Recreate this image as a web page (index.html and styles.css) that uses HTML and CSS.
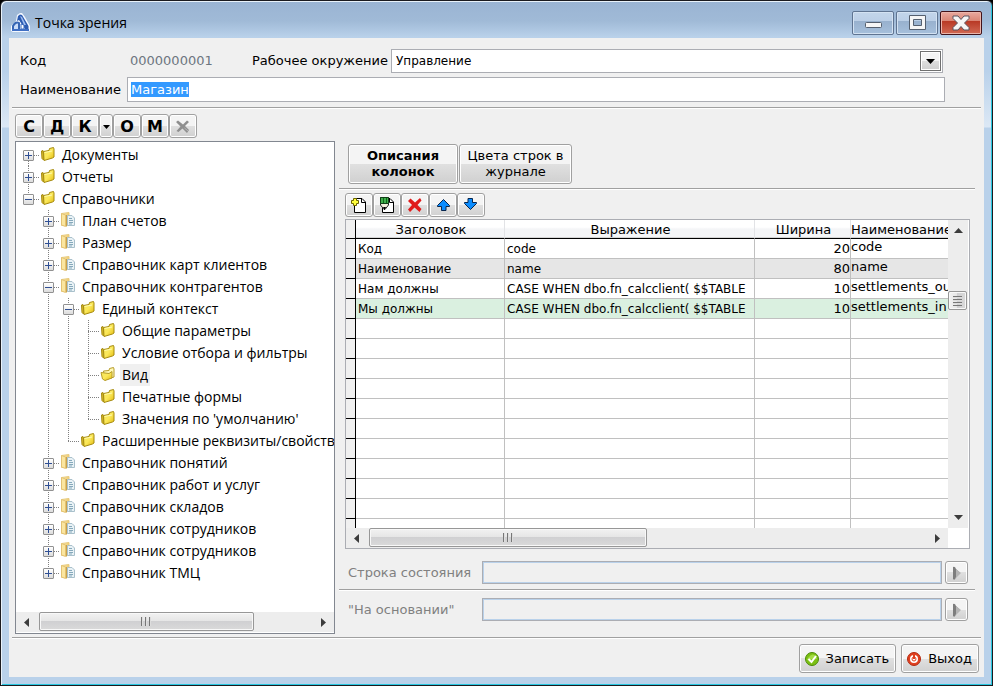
FILE: index.html
```html
<!DOCTYPE html>
<html lang="ru">
<head>
    <meta charset="UTF-8">
    <meta name="viewport" content="width=device-width, initial-scale=1.0">
    <title>Точка зрения</title>
    <link rel="stylesheet" href="styles.css">
</head>
<body>
    <!-- общие иконки -->
    <svg class="sprite" width="0" height="0" aria-hidden="true">
        <defs>
            <linearGradient id="gold" x1="0" y1="0" x2="1" y2="1">
                <stop offset="0" stop-color="#f6e65e"/>
                <stop offset="0.5" stop-color="#fbe85a"/>
                <stop offset="1" stop-color="#e2b80a"/>
            </linearGradient>
            <linearGradient id="sand" x1="0" y1="0" x2="1" y2="0">
                <stop offset="0" stop-color="#fdeeb4"/>
                <stop offset="1" stop-color="#eecb72"/>
            </linearGradient>
        </defs>
        <symbol id="folder" viewBox="0 0 16 16">
            <path d="M1.500 5L3 4.500L4 12L3.500 14L2 12.500Z" fill="#d9bd2c" stroke="#a58a10"/>
            <path d="M3.500 5.500L9 4.500L9.500 2.500L13.500 1.500L14 3V11L12.500 12L4 14.500Z" fill="url(#gold)" stroke="#a58a10"/>
            <path d="M4.500 6.500L12 5" stroke="#fffab0"/>
        </symbol>
        <symbol id="folder-open" viewBox="0 0 16 16">
            <path d="M3.500 5L9 4.500L9.500 2.500L13.500 1.500L14 3V11L5 14Z" fill="#fff9b8" stroke="#b79c2a"/>
            <path d="M1 6.500L9 7.500L12 5.500V12L5 14.500L2.500 13Z" fill="url(#gold)" stroke="#b79c2a"/>
        </symbol>
        <symbol id="book" viewBox="0 0 16 16">
            <path d="M1.500 1.500L9 0.500V13L1.500 13.500Z" fill="url(#sand)" stroke="#e8cb80"/>
            <path d="M7.500 3.500H12L14.500 6V13.500H7.500Z" fill="#e9f2f6" stroke="#a9c0cb"/>
            <path d="M9 6.500H12M9 8.500H13M9 10.500H13M9 12H12" stroke="#86a9bb"/>
            <path d="M1.500 1.500L5.500 3V14.500L1.500 13Z" fill="#fbe6a0" stroke="#e3c272"/>
            <path d="M6.500 3V14.500" stroke="#c9a14a"/>
        </symbol>
        <symbol id="page" viewBox="0 0 18 18">
            <path d="M4.500 2.500H12L15.500 6V16.500H4.500Z" fill="#fff" stroke="#000"/>
            <path d="M11.500 2.500V6.500H15.500" fill="none" stroke="#000"/>
        </symbol>
    </svg>

    <div class="window">
        <header class="titlebar">
            <svg class="app-icon" width="20" height="20" viewBox="0 0 20 20">
                <path d="M0 18V13L5 8L6 2L9 0H11L14 4L19 13V18L16 19H2Z" fill="#f4f8ff"/>
                <path d="M6 8L7 3L9 1.500L11 2L17.500 13V16H14L8 7Z" fill="#2c5bb0"/>
                <path d="M9 3L11 4L15 12L13 12Z" fill="#9dbcf0"/>
                <path d="M2 16V13Q5 8 8 10V16" fill="#c9dcf8" stroke="#3465b4" stroke-width="2"/>
                <path d="M10 16V11L13 12V16Z" fill="#fff" stroke="#3c6cc0"/>
                <path d="M1 17H18" stroke="#3f6fc4" stroke-width="2"/>
            </svg>
            <h1>Точка зрения</h1>
            <div class="window-controls">
                <button type="button" aria-label="Свернуть">
                    <svg width="20" height="16" viewBox="0 0 20 16"><rect x="2.500" y="7.500" width="16" height="5" rx="1" fill="#f6f6f6" stroke="#55606f"/></svg>
                </button>
                <button type="button" aria-label="Развернуть">
                    <svg width="20" height="16" viewBox="0 0 20 16"><path d="M2.500 0.500H18.500V14.500H2.500ZM6.500 4.500V10.500H14.500V4.500Z" fill="#f6f6f6" fill-rule="evenodd" stroke="#55606f"/></svg>
                </button>
                <button type="button" class="close" aria-label="Закрыть">
                    <svg width="20" height="16" viewBox="0 0 20 16"><path d="M2 1H7L10 4.500L13 1H18V3.500L13.500 8L18 12.500V15H13L10 11.500L7 15H2V12.500L6.500 8L2 3.500Z" fill="#f6f6f6" stroke="#5b5560"/></svg>
                </button>
            </div>
        </header>

        <form class="client">
            <!-- реквизиты -->
            <div class="fields">
                <div class="field-row">
                    <span class="code-label">Код</span>
                    <output class="code">0000000001</output>
                    <label for="environment">Рабочее окружение</label>
                    <div class="combo">
                        <select id="environment">
                            <option>Управление</option>
                        </select>
                        <span class="combo-arrow"><svg width="9" height="5" viewBox="0 0 9 5"><path d="M0 0H9L4.500 5Z"/></svg></span>
                    </div>
                </div>
                <div class="field-row name-row">
                    <label for="name">Наименование</label>
                    <input type="text" id="name" value="Магазин">
                </div>
            </div>
            <hr>

            <div class="main">
                <!-- дерево -->
                <section class="left">
                    <div class="toolbar letters">
                        <button type="button">С</button>
                        <button type="button">Д</button>
                        <button type="button">К</button>
                        <button type="button" class="narrow" aria-label="Ещё"><svg width="7" height="4" viewBox="0 0 7 4"><path d="M0 0H7L3.500 4Z"/></svg></button>
                        <button type="button">О</button>
                        <button type="button">М</button>
                        <button type="button" aria-label="Удалить" disabled>
                            <svg width="16" height="16" viewBox="0 0 16 16"><path d="M1 3L3 1.500L8 5.500L12 1.500L14 3L10 7L14 11L12 14L7.500 9.500L3.500 13L1.500 12L5.500 7.500Z" fill="#8f8f8f"/><path d="M9.500 9L13 12" stroke="#b8b8b8"/></svg>
                        </button>
                    </div>
                    <div class="tree-box">
                        <ul class="tree">
                            <li>
                                <div class="node"><button type="button" class="toggle plus" aria-label="Развернуть"></button><svg><use href="#folder"/></svg><span>Документы</span></div>
                            </li>
                            <li>
                                <div class="node"><button type="button" class="toggle plus" aria-label="Развернуть"></button><svg><use href="#folder"/></svg><span>Отчеты</span></div>
                            </li>
                            <li>
                                <div class="node"><button type="button" class="toggle" aria-label="Свернуть"></button><svg><use href="#folder"/></svg><span>Справочники</span></div>
                                <ul>
                                    <li><div class="node"><button type="button" class="toggle plus" aria-label="Развернуть"></button><svg><use href="#book"/></svg><span>План счетов</span></div></li>
                                    <li><div class="node"><button type="button" class="toggle plus" aria-label="Развернуть"></button><svg><use href="#book"/></svg><span>Размер</span></div></li>
                                    <li><div class="node"><button type="button" class="toggle plus" aria-label="Развернуть"></button><svg><use href="#book"/></svg><span>Справочник карт клиентов</span></div></li>
                                    <li>
                                        <div class="node"><button type="button" class="toggle" aria-label="Свернуть"></button><svg><use href="#book"/></svg><span>Справочник контрагентов</span></div>
                                        <ul>
                                            <li>
                                                <div class="node"><button type="button" class="toggle" aria-label="Свернуть"></button><svg><use href="#folder"/></svg><span>Единый контекст</span></div>
                                                <ul>
                                                    <li><div class="node leaf"><svg><use href="#folder"/></svg><span>Общие параметры</span></div></li>
                                                    <li><div class="node leaf"><svg><use href="#folder"/></svg><span>Условие отбора и фильтры</span></div></li>
                                                    <li><div class="node leaf"><svg><use href="#folder-open"/></svg><span class="selected">Вид</span></div></li>
                                                    <li><div class="node leaf"><svg><use href="#folder"/></svg><span>Печатные формы</span></div></li>
                                                    <li><div class="node leaf"><svg><use href="#folder"/></svg><span>Значения по 'умолчанию'</span></div></li>
                                                </ul>
                                            </li>
                                            <li><div class="node leaf"><svg><use href="#folder"/></svg><span>Расширенные реквизиты/свойства</span></div></li>
                                        </ul>
                                    </li>
                                    <li><div class="node"><button type="button" class="toggle plus" aria-label="Развернуть"></button><svg><use href="#book"/></svg><span>Справочник понятий</span></div></li>
                                    <li><div class="node"><button type="button" class="toggle plus" aria-label="Развернуть"></button><svg><use href="#book"/></svg><span>Справочник работ и услуг</span></div></li>
                                    <li><div class="node"><button type="button" class="toggle plus" aria-label="Развернуть"></button><svg><use href="#book"/></svg><span>Справочник складов</span></div></li>
                                    <li><div class="node"><button type="button" class="toggle plus" aria-label="Развернуть"></button><svg><use href="#book"/></svg><span>Справочник сотрудников</span></div></li>
                                    <li><div class="node"><button type="button" class="toggle plus" aria-label="Развернуть"></button><svg><use href="#book"/></svg><span>Справочник сотрудников</span></div></li>
                                    <li><div class="node"><button type="button" class="toggle plus" aria-label="Развернуть"></button><svg><use href="#book"/></svg><span>Справочник ТМЦ</span></div></li>
                                </ul>
                            </li>
                        </ul>
                        <div class="scroll-h">
                            <svg class="arrow" width="5" height="9" viewBox="0 0 5 9"><path d="M5 0V9L0 4.500Z"/></svg>
                            <div class="track"><div class="thumb tree-thumb"><i></i></div></div>
                            <svg class="arrow" width="5" height="9" viewBox="0 0 5 9"><path d="M0 0V9L5 4.500Z"/></svg>
                        </div>
                    </div>
                </section>

                <!-- описания колонок -->
                <section class="right">
                    <div class="tabs">
                        <button type="button" class="current">Описания<br>колонок</button>
                        <button type="button">Цвета строк в<br>журнале</button>
                    </div>
                    <hr>
                    <div class="panel">
                        <div class="toolbar">
                            <button type="button" aria-label="Добавить">
                                <svg width="18" height="18" viewBox="0 0 18 18"><use href="#page"/><path d="M3.500 2.500H6.500V4.500H8.500V7.500H6.500V9.500H3.500V7.500H1.500V4.500H3.500Z" fill="#ffff3c" stroke="#6d6400"/></svg>
                            </button>
                            <button type="button" aria-label="Изменить">
                                <svg width="18" height="18" viewBox="0 0 18 18"><use href="#page"/><path d="M2.500 1.500H10.500V9L7 13.500L6 13.500L2.500 9Z" fill="#f3efdc" stroke="#222"/><path d="M2.500 1.500H10.500V7.500H2.500Z" fill="#3fae4b" stroke="#123f17"/><path d="M5.500 2V7M8.500 2V7" stroke="#0e6a1a"/><path d="M5 11H8L6.500 14Z"/></svg>
                            </button>
                            <button type="button" aria-label="Удалить">
                                <svg width="18" height="18" viewBox="0 0 18 18"><path d="M2 5L4.500 2.500L9 6.500L14 2L15.500 4.500L11.500 9L15.500 13L13.500 16L8.500 11.500L4 16L2 13.500L6 9Z" fill="#e01b1b"/></svg>
                            </button>
                            <button type="button" aria-label="Вверх">
                                <svg width="18" height="18" viewBox="0 0 18 18"><path d="M9.500 3.500L15.500 9.500V10.500H12V14.500H7.500V10.500H3.500V9.500Z" fill="#0a8cff" stroke="#06254d"/></svg>
                            </button>
                            <button type="button" aria-label="Вниз">
                                <svg width="18" height="18" viewBox="0 0 18 18"><path d="M8.500 13.500L2.500 7.500V6.500H6V2.500H10.500V6.500H14.500V7.500Z" fill="#0a8cff" stroke="#06254d"/></svg>
                            </button>
                        </div>
                        <div class="grid-box">
                            <div class="grid-view">
                                <table>
                                    <colgroup>
                                        <col class="col-mark">
                                        <col class="col-title">
                                        <col class="col-expression">
                                        <col class="col-width">
                                        <col>
                                    </colgroup>
                                    <thead>
                                        <tr><th></th><th>Заголовок</th><th>Выражение</th><th>Ширина</th><th class="cut">Наименование</th></tr>
                                    </thead>
                                    <tbody>
                                        <tr><th></th><td>Код</td><td>code</td><td class="num">20</td><td class="top">code</td></tr>
                                        <tr class="gray"><th></th><td>Наименование</td><td>name</td><td class="num">80</td><td class="top">name</td></tr>
                                        <tr><th></th><td>Нам должны</td><td>CASE WHEN dbo.fn_calcclient( $$TABLE</td><td class="num">10</td><td class="top">settlements_out</td></tr>
                                        <tr class="green"><th></th><td>Мы должны</td><td>CASE WHEN dbo.fn_calcclient( $$TABLE</td><td class="num">10</td><td class="top">settlements_in</td></tr>
                                        <tr><th></th><td></td><td></td><td></td><td></td></tr>
                                        <tr><th></th><td></td><td></td><td></td><td></td></tr>
                                        <tr><th></th><td></td><td></td><td></td><td></td></tr>
                                        <tr><th></th><td></td><td></td><td></td><td></td></tr>
                                        <tr><th></th><td></td><td></td><td></td><td></td></tr>
                                        <tr><th></th><td></td><td></td><td></td><td></td></tr>
                                        <tr><th></th><td></td><td></td><td></td><td></td></tr>
                                        <tr><th></th><td></td><td></td><td></td><td></td></tr>
                                        <tr><th></th><td></td><td></td><td></td><td></td></tr>
                                        <tr><th></th><td></td><td></td><td></td><td></td></tr>
                                        <tr><th></th><td></td><td></td><td></td><td></td></tr>
                                    </tbody>
                                </table>
                            </div>
                            <div class="scroll-v">
                                <svg class="arrow" width="9" height="5" viewBox="0 0 9 5"><path d="M0 5H9L4.500 0Z"/></svg>
                                <div class="track"><div class="thumb"><i></i></div></div>
                                <svg class="arrow" width="9" height="5" viewBox="0 0 9 5"><path d="M0 0H9L4.500 5Z"/></svg>
                            </div>
                            <div class="scroll-h">
                                <svg class="arrow" width="5" height="9" viewBox="0 0 5 9"><path d="M5 0V9L0 4.500Z"/></svg>
                                <div class="track"><div class="thumb grid-thumb"><i></i></div></div>
                                <svg class="arrow" width="5" height="9" viewBox="0 0 5 9"><path d="M0 0V9L5 4.500Z"/></svg>
                            </div>
                        </div>
                    </div>
                    <div class="option-row">
                        <label for="state">Строка состояния</label>
                        <input type="text" id="state" disabled>
                        <button type="button" aria-label="Выбрать" disabled><svg width="12" height="14" viewBox="0 0 12 14"><path d="M2 1Q4 0 5 3L9 7L5 11Q4 15 2 13Z" fill="#7d7d7d"/><path d="M5 3L10 7L5 12Z" fill="#b4b4b4"/></svg></button>
                    </div>
                    <hr>
                    <div class="option-row">
                        <label for="basis">"На основании"</label>
                        <input type="text" id="basis" disabled>
                        <button type="button" aria-label="Выбрать" disabled><svg width="12" height="14" viewBox="0 0 12 14"><path d="M2 1Q4 0 5 3L9 7L5 11Q4 15 2 13Z" fill="#7d7d7d"/><path d="M5 3L10 7L5 12Z" fill="#b4b4b4"/></svg></button>
                    </div>
                </section>
            </div>
            <hr>

            <footer class="actions">
                <button type="button">
                    <svg width="16" height="16" viewBox="0 0 16 16"><circle cx="8" cy="8" r="6.500" fill="#7cc013" stroke="#4c8a0a"/><path d="M4 7Q8 1 12 5L13 8Q8 8 3 9Z" fill="#a5dc45"/><path d="M4.500 8L7.500 11L12 5" fill="none" stroke="#fff" stroke-width="2"/></svg>
                    Записать
                </button>
                <button type="button">
                    <svg width="16" height="16" viewBox="0 0 16 16"><circle cx="8" cy="8" r="6.500" fill="#e0401f" stroke="#b32a12"/><circle cx="8" cy="8" r="4" fill="#fff"/><circle cx="8" cy="8" r="2" fill="none" stroke="#e0401f"/><path d="M8 4V8" stroke="#e0401f" stroke-width="2"/></svg>
                    Выход
                </button>
            </footer>
        </form>
    </div>

    <script>
        // при открытии наименование выделено
        const nameInput = document.getElementById('name');
        nameInput.focus();
        nameInput.select();
    </script>
</body>
</html>
```
FILE: styles.css
```css
* {
    box-sizing: border-box;
}

body {
    margin: 0;
    background-color: #000;
    font-family: "DejaVu Sans", Verdana, sans-serif;
    font-size: 13px;
    line-height: 16px;
    color: #000;
}

button, input, select {
    font: inherit;
    color: inherit;
    margin: 0;
    padding: 0;
}

svg {
    display: block;
    flex: none;
}

.sprite {
    position: absolute;
}

hr {
    flex: none;
    margin: 0;
    border: none;
    height: 2px;
    background: linear-gradient(#a0a0a0 50%, #fff 50%);
}

/* окно */
.window {
    display: flex;
    flex-direction: column;
    height: 100vh;
    min-height: 500px;
    padding: 1px 8px 8px;
    border: 1px solid #1b1b1f;
    border-radius: 6px 6px 0 0;
    background: linear-gradient(#9ab4d3, #a0bad7 20px, #b9d1ea 36px, #b9d1ea 70px, #dce8f5 126px, #b9d1ea 127px);
    box-shadow: inset 1px 1px 0 #e9f2fa, inset -1px -1px 0 #27c7e0;
}

.titlebar {
    flex: none;
    display: flex;
    align-items: center;
    height: 36px;
    padding: 6px 2px 0;
}

.titlebar h1 {
    flex: 1;
    margin: 0 0 0 4px;
    font: 14px/20px "Open Sans", "Noto Sans", sans-serif;
}

.window-controls {
    display: flex;
    gap: 2px;
}

.window-controls button {
    display: flex;
    align-items: center;
    justify-content: center;
    width: 42px;
    height: 24px;
    border: 1px solid #5f7491;
    border-radius: 2px;
    background: linear-gradient(#c3d5ea, #bbcfe6 42%, #98b1ce 43%, #a6c0dc);
    box-shadow: inset 0 0 0 1px #d3e2f2;
}

.window-controls .close {
    border-color: #43131a;
    background: linear-gradient(#e9a99e, #d98473 42%, #b93a26 43%, #d16a55);
    box-shadow: inset 0 0 0 1px #eab5ab;
}

.client {
    flex: 1;
    display: flex;
    flex-direction: column;
    min-height: 0;
    padding: 0 3px;
    background-color: #f0f0f0;
}

/* реквизиты */
.fields {
    flex: none;
    padding: 11px 36px 5px 8px;
}

.field-row {
    display: flex;
    align-items: center;
    height: 24px;
}

.name-row {
    height: 25px;
    margin-top: 4px;
}

.code-label {
    width: 110px;
}

.code {
    width: 122px;
    color: #6d7680;
}

.field-row label {
    flex: none;
    white-space: nowrap;
}

.field-row label[for="environment"] {
    width: 139px;
}

.name-row label {
    width: 107px;
}

.combo {
    flex: 1;
    position: relative;
    margin-right: 2px;
}

.combo select {
    display: block;
    width: 100%;
    height: 24px;
    padding: 0 24px 0 4px;
    border: 1px solid #abadb3;
    border-radius: 0;
    background-color: #fff;
    font-size: 12px;
    appearance: none;
    outline: none;
}

.combo-arrow {
    position: absolute;
    top: 2px;
    right: 2px;
    display: flex;
    align-items: center;
    justify-content: center;
    width: 21px;
    height: 20px;
    border: 1px solid #707070;
    background: linear-gradient(#f4f4f4 50%, #dedede 50%, #cfcfcf);
    box-shadow: inset 0 0 0 1px #fff;
    pointer-events: none;
}

.name-row input {
    flex: 1;
    min-width: 0;
    height: 25px;
    padding: 0 3px;
    border: 1px solid #abadb3;
    background-color: #fff;
    outline: none;
}

::selection {
    background-color: #3399ff;
    color: #fff;
}

.main {
    flex: 1;
    display: flex;
    gap: 4px;
    min-height: 0;
    padding: 5px 6px 3px 3px;
}

/* кнопки */
.toolbar {
    flex: none;
    display: flex;
}

.toolbar button, .tabs button, .option-row button, .actions button {
    display: flex;
    align-items: center;
    justify-content: center;
    border: 1px solid #a0a0a0;
    border-radius: 3px;
    background: linear-gradient(#f4f4f4 50%, #e0e0e0 50%, #d0d0d0);
    box-shadow: inset 0 0 0 1px #fff;
}

.toolbar button {
    width: 28px;
    height: 24px;
}

.toolbar .narrow {
    width: 14px;
}

.letters button {
    padding-top: 2px;
    font-size: 16px;
    font-weight: bold;
}

/* дерево */
.left {
    flex: none;
    display: flex;
    flex-direction: column;
    gap: 3px;
    width: 320px;
}

.tree-box {
    flex: 1;
    display: flex;
    flex-direction: column;
    min-height: 0;
    padding-bottom: 1px;
    border: 1px solid #828790;
    background-color: #fff;
    font: 14px/22px "Open Sans", "Noto Sans", sans-serif;
}

.tree, .tree ul {
    margin: 0;
    padding: 0;
    list-style: none;
}

.tree {
    flex: 1;
    min-height: 0;
    padding: 2px 0 0 4px;
    overflow: hidden;
}

.tree ul {
    padding-left: 20px;
}

.tree li {
    background: repeating-linear-gradient(#808080 0 1px, transparent 1px 2px) 8px 0 / 1px 100% no-repeat;
}

.tree li:last-child {
    background-size: 1px 11px;
}

.tree > li:first-child {
    background-position: 8px 11px;
}

.node {
    display: flex;
    align-items: center;
    height: 22px;
    padding-left: 3px;
    background: repeating-linear-gradient(to right, #808080 0 1px, transparent 1px 2px) 8px 11px / 12px 1px no-repeat;
    white-space: nowrap;
}

.node svg {
    width: 16px;
    height: 16px;
    margin: 0 4px 2px 6px;
}

.node.leaf svg {
    margin-left: 17px;
}

.node span {
    padding: 0 2px;
}

.node .selected {
    background-color: #f0f0f0;
}

.toggle {
    flex: none;
    width: 11px;
    height: 11px;
    border: 1px solid #919191;
    border-radius: 1px;
    background:
        linear-gradient(#2f4f94, #2f4f94) center / 7px 1px no-repeat,
        linear-gradient(#fff, #dcdcdc);
}

.toggle.plus {
    background:
        linear-gradient(#2f4f94, #2f4f94) center / 7px 1px no-repeat,
        linear-gradient(#2f4f94, #2f4f94) center / 1px 7px no-repeat,
        linear-gradient(#fff, #dcdcdc);
}

/* полосы прокрутки */
.scroll-h, .scroll-v {
    flex: none;
    display: flex;
    align-items: center;
    background-color: #ededed;
}

.scroll-h {
    height: 20px;
    padding: 0 8px;
}

.scroll-v {
    flex-direction: column;
    width: 20px;
    padding: 8px 0;
}

.arrow {
    fill: #3c3c3c;
}

.track {
    flex: 1;
    align-self: stretch;
}

.scroll-h .track {
    margin: 0 10px;
}

.thumb {
    display: flex;
    align-items: center;
    justify-content: center;
    border: 1px solid #979797;
    border-radius: 2px;
    box-shadow: inset 0 0 0 1px #f8f8f8;
}

.scroll-h .thumb {
    height: 19px;
    background: linear-gradient(#f2f2f2, #e6e6e6 45%, #d0d0d2 50%, #dadada);
}

.scroll-h .thumb i {
    width: 10px;
    height: 9px;
    background: repeating-linear-gradient(to right, #777 0 1px, #ddd 1px 2px, transparent 2px 4px);
}

.tree-thumb {
    width: 79%;
}

.grid-thumb {
    width: 50%;
}

.scroll-v .thumb {
    width: 19px;
    height: 19px;
    margin-top: 58px;
    background: linear-gradient(to right, #f2f2f2, #e6e6e6 45%, #d0d0d2 50%, #dadada);
}

.scroll-v .thumb i {
    width: 9px;
    height: 10px;
    background: repeating-linear-gradient(#777 0 1px, #ddd 1px 2px, transparent 2px 3px);
}

/* правая часть */
.right {
    flex: 1;
    display: flex;
    flex-direction: column;
    min-width: 0;
    padding: 30px 0 8px;
}

.tabs {
    flex: none;
    display: flex;
    gap: 1px;
    padding: 0 9px 4px;
}

.tabs button {
    width: 113px;
    height: 40px;
}

.tabs .current {
    width: 110px;
    font-weight: bold;
}

.panel {
    flex: 1;
    display: flex;
    flex-direction: column;
    gap: 2px;
    min-height: 0;
    padding: 3px 5px 5px 6px;
}

.grid-box {
    flex: 1;
    display: grid;
    grid-template: 1fr 20px / 1fr 21px;
    min-height: 0;
    border: 1px solid #abadb3;
    background-color: #fff;
}

.grid-view {
    min-width: 0;
    min-height: 0;
    overflow: hidden;
}

.grid-view table {
    width: 100%;
    table-layout: fixed;
    border-collapse: separate;
    border-spacing: 0;
}

.col-mark {
    width: 10px;
}

.col-title {
    width: 149px;
}

.col-expression {
    width: 250px;
}

.col-width {
    width: 96px;
}

.grid-view th, .grid-view td {
    height: 20px;
    padding: 0 0 0 2px;
    border-right: 1px solid #c0c0c0;
    border-bottom: 1px solid #c0c0c0;
    font-weight: normal;
    white-space: nowrap;
    overflow: hidden;
}

.grid-view td {
    font-size: 12px;
}

.grid-view tr > :last-child {
    border-right: none;
}

.grid-view thead th {
    height: 19px;
    padding-top: 2px;
    border-right-color: #e2e3e6;
    border-bottom-color: #000;
    background: linear-gradient(#fff 40%, #f4f5f7 50%, #f4f5f7 94%, #d5d5d5 95%);
}

.grid-view tr > th:first-child {
    border-right-color: #000;
    border-bottom-color: #000;
    background: #f0f0f0;
}

.grid-view .cut {
    padding-left: 0;
    text-align: left;
}

.grid-view .num {
    padding: 0;
    font-size: 13px;
    text-align: right;
}

.grid-view .top {
    padding: 0;
    font-size: 13px;
    vertical-align: top;
}

.gray td {
    background-color: #e6e6e6;
}

.green td {
    background-color: #daf0e0;
}

.option-row {
    flex: none;
    display: flex;
    align-items: center;
    padding: 7px 7px 5px 9px;
    color: #808080;
}

.option-row label {
    width: 134px;
}

.option-row input {
    flex: 1;
    min-width: 0;
    height: 23px;
    border: 1px solid #abadb3;
    background-color: #f0f0f0;
    box-shadow: inset 0 0 0 1px #b9d1ea;
}

.option-row button {
    width: 23px;
    height: 23px;
    margin-left: 3px;
}

/* нижние кнопки */
.actions {
    flex: none;
    display: flex;
    justify-content: flex-end;
    gap: 5px;
    padding: 5px 2px 4px;
}

.actions button {
    gap: 6px;
    height: 29px;
    padding: 0 6px 0 4px;
}
```
